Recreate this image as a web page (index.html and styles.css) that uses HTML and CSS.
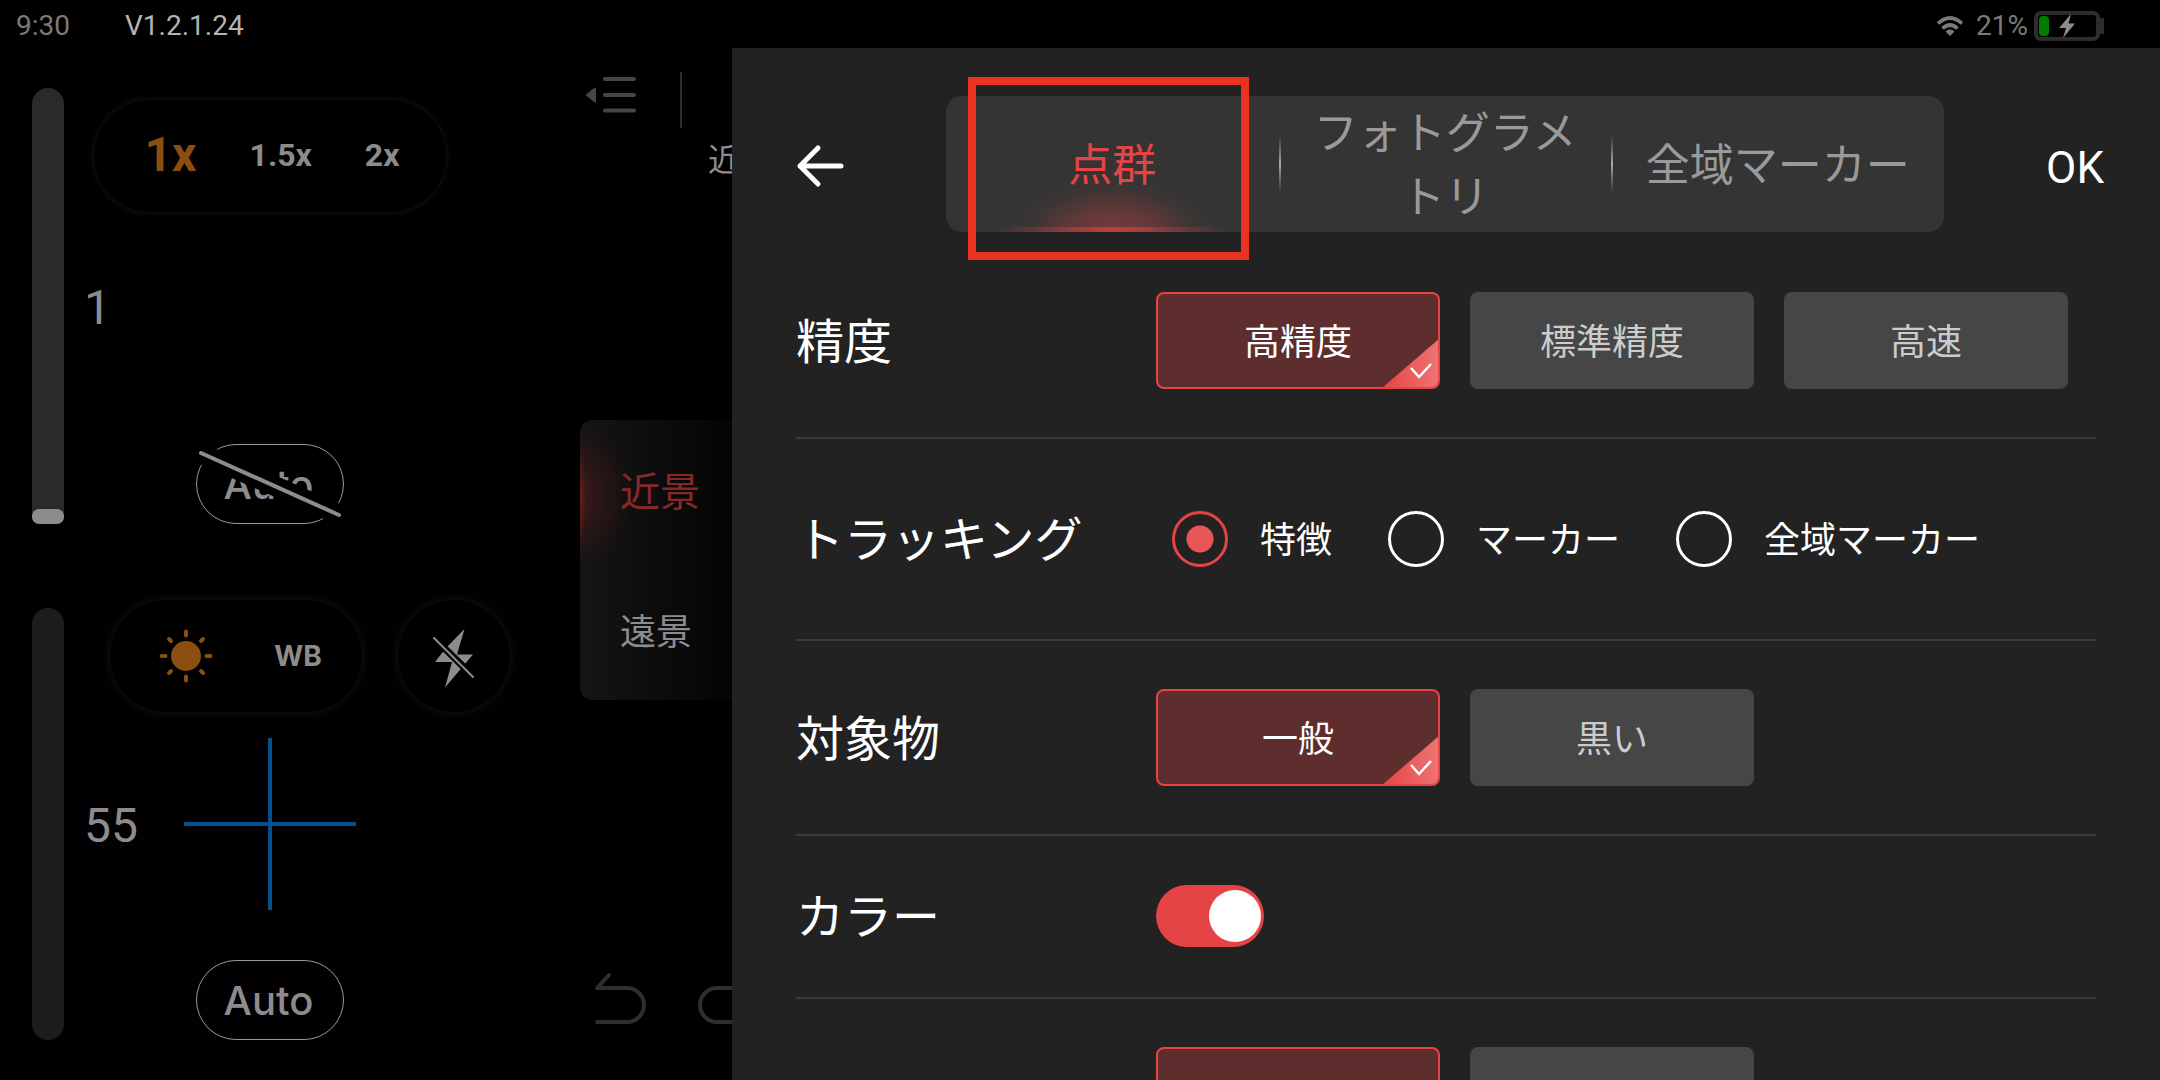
FILE: index.html
```html
<!DOCTYPE html>
<html lang="ja">
<head>
<meta charset="utf-8">
<meta name="viewport" content="width=device-width, initial-scale=1">
<title>スキャン設定</title>
<link rel="stylesheet" href="styles.css">
</head>
<body>
<header class="status">
  <span class="status-time">9:30</span>
  <span class="status-version">V1.2.1.24</span>
  <div class="status-right">
    <svg class="wifi" viewBox="0 0 28 20" aria-hidden="true">
      <path d="M2 7.500Q14-3.500 26 7.500M6.500 12.500Q14 5.500 21.500 12.500" fill="none" stroke="currentColor" stroke-width="3.600"/>
      <path d="M9.500 15.500Q14 11.500 18.500 15.500L14 20Z" fill="currentColor"/>
    </svg>
    <span>21%</span>
    <svg class="battery" viewBox="0 0 70 30" aria-hidden="true">
      <rect x="2" y="2" width="62" height="26" rx="5" fill="none" stroke="#2d2d2b" stroke-width="4"/>
      <path d="M66 7h4v16h-4z" fill="#2d2d2b"/>
      <rect x="5" y="5" width="10" height="20" rx="4" fill="#007c00"/>
      <path d="M37 3L25 17H32L29 27L41 12.500H34.500Z" fill="#8c8c8c"/>
    </svg>
  </div>
</header>

<main class="app">
  <section class="cameras">
    <div class="camera">
      <input class="level" type="range" min="0" max="100" value="0" aria-label="露出">
      <div class="camera-body">
        <div class="camera-tools camera-tools-zoom">
          <div class="pill pill-zoom">
            <button class="zoom zoom-on" type="button">1x</button>
            <button class="zoom" type="button">1.5x</button>
            <button class="zoom" type="button">2x</button>
          </div>
        </div>
        <output class="value">1</output>
        <button class="auto" type="button">Auto
          <svg class="auto-off" viewBox="0 0 148 80" aria-hidden="true">
            <path d="M-5 5L153 75" stroke="#000" stroke-width="20"/>
            <path d="M5 9L143 71" stroke="#8c8c8c" stroke-width="4" stroke-linecap="round"/>
          </svg>
        </button>
      </div>
    </div>
    <div class="camera camera-live">
      <input class="level level-dim" type="range" min="0" max="100" value="55" aria-label="明るさ">
      <div class="camera-body">
        <div class="camera-tools camera-tools-light">
          <div class="pill pill-light">
            <button class="icon-button" type="button" aria-label="明るさ">
              <svg class="sun" viewBox="0 0 56 56" aria-hidden="true">
                <circle cx="28" cy="28" r="15" fill="currentColor"/>
                <path d="M28 3.500v4M28 48.500v4M3.500 28h4M48.500 28h4M11 11l2 2M43 43l2 2M45 11l-2 2M13 43l-2 2" stroke="currentColor" stroke-width="4" stroke-linecap="round"/>
              </svg>
            </button>
            <button class="white-balance" type="button">WB</button>
          </div>
          <button class="pill pill-flash" type="button" aria-label="フラッシュ オフ">
            <svg class="flash" viewBox="0 0 56 64" aria-hidden="true">
              <path d="M38.500 3L31 28.500H47L19 61.500L26 36H9L20 22Z" fill="#8c8c8c"/>
              <path d="M6 10L50 53" stroke="#000" stroke-width="7"/>
              <path d="M8 12L47 51" stroke="#8c8c8c" stroke-width="2" stroke-linecap="round"/>
            </svg>
          </button>
        </div>
        <output class="value">55</output>
        <button class="auto" type="button">Auto</button>
      </div>
      <div class="crosshair"></div>
    </div>
  </section>

  <aside class="tools">
    <div class="tools-top">
      <button class="icon-button" type="button" aria-label="メニュー">
        <svg class="menu" viewBox="0 0 56 56" aria-hidden="true">
          <path d="M21 7h29M21 23h29M21 38.500h29" stroke="currentColor" stroke-width="4" stroke-linecap="round"/>
          <path d="M11 16.500L3 23L11 29.500Z" fill="currentColor" stroke="currentColor" stroke-width="2" stroke-linejoin="round"/>
        </svg>
      </button>
      <span class="tools-rule"></span>
    </div>
    <p class="range-name">近景</p>
    <div class="range">
      <button class="range-item range-on" type="button">近景</button>
      <button class="range-item" type="button">遠景</button>
    </div>
    <div class="history">
      <button class="icon-button" type="button" aria-label="元に戻す">
        <svg class="undo" viewBox="0 0 56 56" aria-hidden="true">
          <path d="M17 6L5 19H35A17 17 0 0 1 35 53H5" fill="none" stroke="currentColor" stroke-width="4" stroke-linecap="round" stroke-linejoin="round"/>
        </svg>
      </button>
      <button class="icon-button" type="button" aria-label="やり直す">
        <svg class="undo" viewBox="0 0 56 56" aria-hidden="true">
          <path d="M39 6L51 19H21A17 17 0 0 0 21 53H51" fill="none" stroke="currentColor" stroke-width="4" stroke-linecap="round" stroke-linejoin="round"/>
        </svg>
      </button>
    </div>
  </aside>

  <section class="drawer">
    <div class="drawer-head">
      <button class="back-button" type="button" aria-label="戻る">
        <svg class="back" viewBox="0 0 48 48" aria-hidden="true">
          <path d="M22 6L4 24L22 42M4 24H45" fill="none" stroke="#fff" stroke-width="5" stroke-linecap="round" stroke-linejoin="round"/>
        </svg>
      </button>
      <div class="tabs" role="tablist">
        <button class="tab tab-on" type="button" role="tab" aria-selected="true">点群<span class="highlight"></span></button>
        <button class="tab" type="button" role="tab" aria-selected="false">フォトグラメトリ</button>
        <button class="tab" type="button" role="tab" aria-selected="false">全域マーカー</button>
      </div>
      <button class="ok" type="button">OK</button>
    </div>

    <div class="settings">
      <div class="row">
        <span class="row-name" id="precision">精度</span>
        <div class="options" role="group" aria-labelledby="precision">
          <button class="option option-on" type="button" aria-pressed="true">高精度
            <svg class="corner" viewBox="0 0 57 49" aria-hidden="true">
              <defs><linearGradient id="corner-fill"><stop offset="0" stop-color="#e64444"/><stop offset="1" stop-color="#ed7474"/></linearGradient></defs>
              <path d="M0 49L57 0V49Z" fill="url(#corner-fill)"/>
              <path d="M29 29L37 38L49 25" fill="none" stroke="#fff" stroke-width="2.500"/>
            </svg>
          </button>
          <button class="option" type="button" aria-pressed="false">標準精度</button>
          <button class="option" type="button" aria-pressed="false">高速</button>
        </div>
      </div>

      <div class="row row-tracking">
        <span class="row-name" id="tracking">トラッキング</span>
        <div class="radios" role="radiogroup" aria-labelledby="tracking">
          <label class="radio"><input type="radio" name="tracking" checked><span class="radio-text">特徴</span></label>
          <label class="radio"><input type="radio" name="tracking"><span class="radio-text">マーカー</span></label>
          <label class="radio"><input type="radio" name="tracking"><span class="radio-text">全域マーカー</span></label>
        </div>
      </div>

      <div class="row">
        <span class="row-name" id="object">対象物</span>
        <div class="options" role="group" aria-labelledby="object">
          <button class="option option-on" type="button" aria-pressed="true">一般
            <svg class="corner" viewBox="0 0 57 49" aria-hidden="true">
              <path d="M0 49L57 0V49Z" fill="url(#corner-fill)"/>
              <path d="M29 29L37 38L49 25" fill="none" stroke="#fff" stroke-width="2.500"/>
            </svg>
          </button>
          <button class="option" type="button" aria-pressed="false">黒い</button>
        </div>
      </div>

      <div class="row row-color">
        <label class="row-name" for="color">カラー</label>
        <input class="toggle" id="color" type="checkbox" role="switch" checked>
      </div>

      <div class="row">
        <span class="row-name"></span>
        <div class="options">
          <button class="option option-on" type="button" aria-pressed="true" aria-label="オン"></button>
          <button class="option" type="button" aria-pressed="false" aria-label="オフ"></button>
        </div>
      </div>
    </div>
  </section>
</main>
</body>
</html>
```
FILE: styles.css
```css
:root {
  --red: #e64444;
  --dim: #8c8c8c;
  --orange: #8c4d10;
}

* {
  box-sizing: border-box;
}

body {
  margin: 0;
  height: 100vh;
  display: flex;
  flex-direction: column;
  overflow: hidden;
  background: #000;
  color: #fff;
  font-family: Roboto, "Noto Sans CJK JP", sans-serif;
}

button {
  margin: 0;
  padding: 0;
  border: 0;
  background: none;
  color: inherit;
  font: inherit;
}

svg {
  display: block;
}

.icon-button {
  flex: none;
}

/* Status bar */
.status {
  flex: none;
  height: 48px;
  display: flex;
  align-items: center;
  padding: 4px 56px 0 16px;
  font-size: 28px;
  line-height: 32px;
  color: #7a7a7a;
}

.status-version {
  margin-left: 55px;
  color: #b4b4b4;
}

.status-right {
  margin-left: auto;
  display: flex;
  align-items: center;
  gap: 6px;
}

.wifi {
  width: 28px;
  height: 20px;
  margin-right: 6px;
}

.battery {
  width: 70px;
  height: 30px;
}

.app {
  flex: 1;
  min-height: 0;
  display: grid;
  grid-template-columns: 540px 192px minmax(0, 1fr);
  grid-template-rows: minmax(0, 1fr);
}

/* Camera previews */
.cameras {
  display: grid;
  grid-template-rows: minmax(0, 520fr) minmax(0, 512fr);
}

.camera {
  position: relative;
  display: flex;
  gap: 20px;
  padding: 40px 24px 44px 32px;
}

.camera-live {
  padding-bottom: 40px;
  background: #020003;
}

.level {
  appearance: none;
  writing-mode: vertical-lr;
  direction: rtl;
  flex: none;
  width: 32px;
  height: 100%;
  margin: 0;
  border-radius: 16px 16px 8px 8px;
  background: #2a2a2a;
}

.level::-webkit-slider-thumb {
  appearance: none;
  width: 32px;
  height: 15px;
  border-radius: 7px;
  background: var(--dim);
}

.level-dim {
  border-radius: 16px;
  background: #1e1c1e;
}

.level-dim::-webkit-slider-thumb {
  background: transparent;
}

.camera-body {
  flex: 1;
  display: grid;
  grid-template-rows: minmax(0, 1fr) auto minmax(0, 1fr);
  justify-items: start;
}

.camera-tools {
  display: flex;
  align-self: start;
  gap: 36px;
}

.camera-tools-zoom {
  margin: 12px 0 0 10px;
}

.camera-tools-light {
  margin: -8px 0 0 26px;
}

.pill {
  height: 112px;
  display: flex;
  align-items: center;
  justify-content: center;
  border-radius: 56px;
  background: #000;
  box-shadow: 0 0 6px 1px #131313;
}

.pill-zoom {
  width: 352px;
  gap: 53px;
  padding-left: 4px;
}

.pill-light {
  width: 252px;
  gap: 60px;
  padding-left: 8px;
}

.pill-flash {
  width: 112px;
  padding-top: 4px;
}

.zoom {
  font-size: 32px;
  line-height: 46px;
  padding-bottom: 2px;
  font-weight: 700;
  color: var(--dim);
}

.zoom-on {
  font-size: 48px;
  color: var(--orange);
}

.sun {
  width: 56px;
  height: 56px;
  color: var(--orange);
}

.white-balance {
  font-family: Inter, sans-serif;
  font-size: 28px;
  font-weight: 700;
  color: var(--dim);
}

.flash {
  width: 56px;
  height: 64px;
}

.value {
  padding-top: 4px;
  font-size: 48px;
  line-height: 56px;
  color: var(--dim);
}

.auto {
  position: relative;
  align-self: end;
  width: 148px;
  height: 80px;
  margin-left: 112px;
  padding-right: 3px;
  border: 1px solid #9a9a9a;
  border-radius: 40px;
  font-family: Inter, sans-serif;
  font-size: 40px;
  font-weight: 500;
  color: var(--dim);
}

.auto-off {
  position: absolute;
  top: -1px;
  left: -1px;
  width: 148px;
  height: 80px;
  overflow: visible;
}

.crosshair {
  position: absolute;
  top: 50%;
  left: 50%;
  width: 172px;
  height: 172px;
  transform: translate(-50%, -50%);
  background:
    linear-gradient(#05518c, #05518c) center / 4px 100% no-repeat,
    linear-gradient(#05518c, #05518c) center / 100% 4px no-repeat;
}

/* Tool column, partly under the drawer */
.tools {
  display: flex;
  flex-direction: column;
  padding: 24px 0 55px 40px;
  overflow: hidden;
}

.tools-top {
  display: flex;
  gap: 40px;
  padding-left: 4px;
}

.menu {
  width: 56px;
  height: 56px;
  color: #464646;
}

.tools-rule {
  flex: none;
  width: 2px;
  height: 56px;
  background: #2c2c2c;
}

.range-name {
  margin: 16px 0 0 128px;
  font-size: 32px;
  line-height: 32px;
  white-space: nowrap;
  color: var(--dim);
}

.range {
  height: 280px;
  margin-top: 244px;
  display: grid;
  grid-template-rows: 1fr 1fr;
  border-radius: 12px 0 0 12px;
  background:
    radial-gradient(52px 70px at 0 76px, rgba(150, 35, 35, 0.3), rgba(150, 35, 35, 0.12) 60%, transparent),
    linear-gradient(90deg, #151515, #040404);
}

.range-item {
  padding: 5px 0 0 40px;
  font-size: 36px;
  line-height: 48px;
  text-align: left;
  color: var(--dim);
}

.range-on {
  font-size: 40px;
  color: #852828;
  background: radial-gradient(closest-side, rgba(150, 35, 35, 0.5), transparent) -6px 22px / 12px 112px no-repeat;
}

.history {
  display: flex;
  gap: 48px;
  margin-top: auto;
  padding-left: 12px;
}

.undo {
  width: 56px;
  height: 56px;
  color: #2e2e2e;
}

/* Settings drawer */
.drawer {
  min-width: 0;
  overflow: hidden;
  background: #222;
}

.drawer-head {
  display: flex;
  align-items: center;
  gap: 102px;
  padding: 48px 56px 12px 64px;
}

.back-button {
  flex: none;
  padding-top: 4px;
}

.back {
  width: 48px;
  height: 48px;
}

.tabs {
  flex: 1;
  min-width: 0;
  display: grid;
  grid-template-columns: repeat(3, 1fr);
  border-radius: 16px;
  background: #343434;
}

.tab {
  position: relative;
  min-height: 136px;
  padding: 4px 24px 0;
  font-size: 44px;
  line-height: 64px;
  color: #9a9a9a;
}

.tab + .tab {
  background: linear-gradient(transparent, #aaa, transparent) left center / 2px 56px no-repeat;
}

.tab-on {
  color: var(--red);
  background:
    linear-gradient(90deg, transparent 15%, rgba(230, 68, 68, 0.6) 50%, transparent 85%) bottom / 100% 5px no-repeat,
    radial-gradient(104px 56px at 50% 100%, rgba(230, 68, 68, 0.4), rgba(230, 68, 68, 0.26) 40%, rgba(230, 68, 68, 0.06) 75%, transparent);
}

.highlight {
  position: absolute;
  inset: -19px 30px -28px 22px;
  border: 8px solid #ea3323;
}

.ok {
  flex: none;
  padding-top: 8px;
  font-size: 44px;
  line-height: 64px;
}

.settings {
  padding: 0 64px;
}

.row {
  display: flex;
  align-items: center;
  padding: 48px 0;
  border-bottom: 2px solid #3a3a3a;
}

.row-tracking {
  padding: 72px 0;
}

.row-color {
  padding: 49px 0 50px;
}

.row-name {
  flex: none;
  width: 360px;
  padding-top: 4px;
  font-size: 48px;
  line-height: 52px;
}

.options {
  flex: 1;
  display: flex;
  gap: 30px;
}

.option {
  position: relative;
  flex: 0 1 284px;
  height: 97px;
  padding-top: 4px;
  overflow: hidden;
  border-radius: 8px;
  background: #464646;
  font-size: 36px;
  line-height: 48px;
  color: #ccc;
}

.option-on {
  border: 2px solid var(--red);
  background: #5e2d2d;
  color: #fff;
}

.corner {
  position: absolute;
  right: -1px;
  bottom: -1px;
  width: 57px;
  height: 49px;
}

.radios {
  display: flex;
  gap: 56px;
  padding-left: 16px;
}

.radio {
  display: flex;
  align-items: center;
  gap: 32px;
  font-size: 36px;
  line-height: 48px;
  white-space: nowrap;
}

.radio-text {
  padding-top: 3px;
}

.radio input {
  appearance: none;
  width: 56px;
  height: 56px;
  margin: 0;
  border: 3px solid #fff;
  border-radius: 50%;
}

.radio input:checked {
  border-color: var(--red);
  background: radial-gradient(circle, #ea5656 13px, transparent 14px);
}

.toggle {
  appearance: none;
  width: 108px;
  height: 62px;
  margin: 0;
  padding: 5px 3px;
  display: flex;
  border-radius: 31px;
  background: #555;
}

.toggle::before {
  content: "";
  width: 52px;
  height: 52px;
  border-radius: 50%;
  background: #fff;
}

.toggle:checked {
  justify-content: flex-end;
  background: var(--red);
}
```
